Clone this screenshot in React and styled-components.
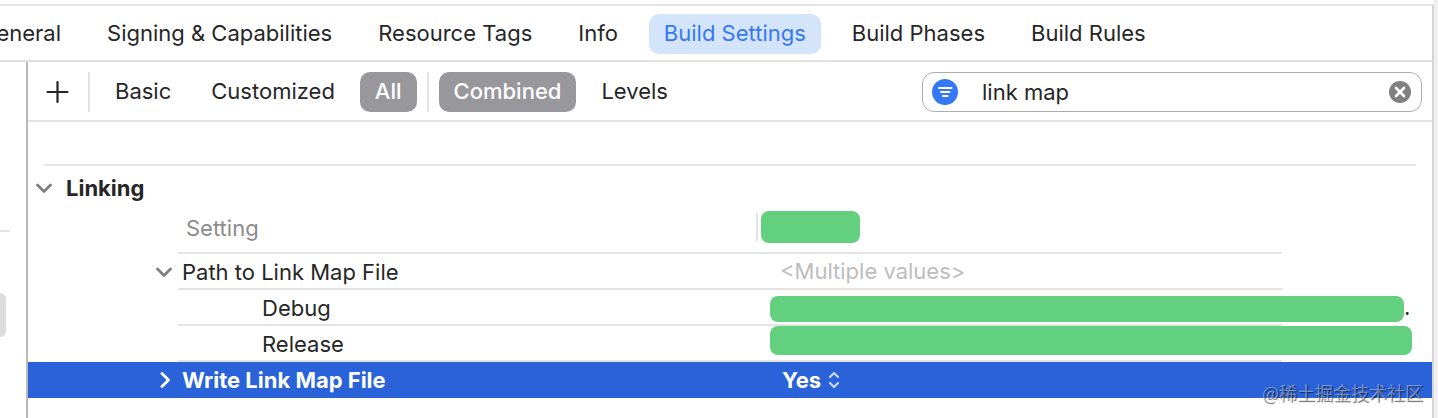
import React, { useState } from "react";
import styled, { createGlobalStyle } from "styled-components";

const GlobalStyle = createGlobalStyle`
  * {
    box-sizing: border-box;
  }

  body {
    margin: 0;
    background: #ffffff;
    color: #262626;
    font-family: Inter, "Noto Sans CJK SC", sans-serif;
    font-size: 22px;
    line-height: 28px;
  }

  button, input, select {
    margin: 0;
    padding: 0;
    border: none;
    background: none;
    color: inherit;
    font: inherit;
  }
`;

const Window = styled.div`
  position: relative;
  min-height: 100vh;
  padding-top: 4px;
  border-right: 4px solid #efefef;
  overflow: hidden;
  display: flex;
  flex-direction: column;
`;

const TabBar = styled.nav`
  display: flex;
  align-items: center;
  gap: 16px;
  height: 58px;
  padding-top: 2px;
  border-top: 2px solid #e4e4e4;
  border-bottom: 2px solid #e0e0e0;
  border-right: 2px solid #d4d4d4;
`;

const Tab = styled.button`
  flex: none;
  height: 40px;
  padding: 0 15px 2px;
  border-radius: 10px;
  white-space: nowrap;
  color: ${({ $active }) => ($active ? "#3478f6" : "#262626")};
  background: ${({ $active }) => ($active ? "#d4e5fb" : "transparent")};

  &:first-child {
    margin-left: -35px;
  }
`;

const Body = styled.div`
  flex: 1;
  display: flex;
  border-right: 2px solid #d4d4d4;
`;

const Sidebar = styled.aside`
  width: 28px;
  flex: none;
  padding-top: 168px;
  border-right: 2px solid #b9b9b9;
`;

const SidebarRule = styled.div`
  width: 10px;
  height: 2px;
  background: #e4e4e4;
`;

const SidebarItem = styled.div`
  width: 6px;
  height: 44px;
  margin-top: 61px;
  border-radius: 0 6px 6px 0;
  background: #dcdcdc;
`;

const Editor = styled.main`
  flex: 1;
  min-width: 0;
`;

const Toolbar = styled.div`
  display: flex;
  align-items: center;
  height: 60px;
  padding: 2px 10px 0 18px;
  border-bottom: 2px solid #e4e4e4;
`;

const AddButton = styled.button`
  width: 24px;
  height: 24px;
  margin-right: 18px;

  svg {
    display: block;
  }
`;

const Divider = styled.div`
  width: 2px;
  height: 40px;
  background: #e2e2e2;
`;

const FilterGroup = styled.div`
  display: flex;
  gap: 10px;
  padding: 0 10px;
`;

const Filter = styled.button`
  height: 40px;
  padding: 0 15px 2px;
  border-radius: 10px;
  font-weight: ${({ $active }) => ($active ? 500 : 400)};
  color: ${({ $active }) => ($active ? "#ffffff" : "#262626")};
  background: ${({ $active }) => ($active ? "#98989c" : "transparent")};
`;

const SearchField = styled.label`
  display: flex;
  align-items: center;
  width: 500px;
  height: 40px;
  margin-left: auto;
  padding: 0 10px 0 9px;
  border: 1px solid #adadad;
  border-radius: 12px;

  svg {
    flex: none;
    display: block;
  }
`;

const SearchInput = styled.input`
  flex: 1;
  min-width: 0;
  padding-left: 24px;
  outline: none;
`;

const Section = styled.section`
  padding-top: 42px;
`;

const SectionHeader = styled.div`
  display: flex;
  align-items: center;
  gap: 14px;
  height: 46px;
  margin: 0 16px;
  border-top: 2px solid #e4e4e4;

  button {
    margin-left: -8px;
  }
`;

const SectionTitle = styled.h2`
  margin: 0;
  font-size: 22px;
  font-weight: 700;
`;

const Disclosure = styled.button`
  display: block;
  width: 16px;
  height: 16px;

  svg {
    display: block;
  }
`;

const Settings = styled.table`
  width: 100%;
  table-layout: fixed;
  border-collapse: separate;
  border-spacing: 0;
`;

const Gutter = styled.col`
  width: 150px;
`;

const NameCol = styled.col`
  width: 578px;
`;

const Cell = styled.td`
  height: 36px;
  padding: 0;
  border-bottom: ${({ $ruled }) => ($ruled ? "2px solid #e4e4e4" : "none")};

  ${Disclosure} {
    margin-left: 128px;
  }
`;

const HeadCell = styled.th`
  height: 44px;
  padding: 0 0 8px;
  border-bottom: 2px solid #e4e4e4;
  text-align: left;
  font-weight: 400;
  color: #8c8c8c;
`;

const Name = styled.div`
  padding-top: 2px;
  padding-left: ${({ $indent }) => $indent}px;
`;

const ValueHead = styled.div`
  display: flex;
  align-items: center;
  gap: 3px;
`;

const HeadDivider = styled.div`
  width: 2px;
  height: 28px;
  background: #e2e2e2;
`;

const Value = styled.div`
  display: flex;
  align-items: center;
  gap: 6px;
  padding-left: 24px;
`;

const Placeholder = styled.span`
  color: #bdbdbd;
`;

const Redacted = styled.div`
  flex: none;
  width: ${({ $width }) => $width};
  height: ${({ $height }) => $height}px;
  border-radius: 8px;
  background: #62d07e;
`;

const PathValue = styled.div`
  display: flex;
  align-items: flex-start;
  height: 34px;
  padding: ${({ $top }) => $top}px 0 0 14px;
  line-height: 22px;
`;

const SelectedRow = styled.tr`
  background: #2962d9;
  color: #ffffff;
  font-weight: 700;

  ${Name} {
    padding-top: 0;
  }
`;

const ValueSelect = styled.select`
  appearance: none;
  width: 42px;
  height: 28px;
  padding-left: 2px;
  outline: none;
`;

const Watermark = styled.div`
  position: absolute;
  right: 11px;
  bottom: 13px;
  font-family: "Noto Sans CJK SC", sans-serif;
  font-size: 18px;
  line-height: 26px;
  color: rgba(255, 255, 255, 0.4);
  text-shadow: 1px 1px 1px rgba(0, 0, 0, 0.6);
`;

const tabs = [
  "General",
  "Signing & Capabilities",
  "Resource Tags",
  "Info",
  "Build Settings",
  "Build Phases",
  "Build Rules",
];

const Chevron = ({ open, color }) => (
  <svg width="16" height="16" viewBox="0 0 16 16" fill="none">
    <path
      d={open ? "M1.5 5 L8 11.5 L14.5 5" : "M6 1.5 L12.5 8 L6 14.5"}
      stroke={color}
      strokeWidth="2.8"
      strokeLinecap="round"
      strokeLinejoin="round"
    />
  </svg>
);

const PlusIcon = () => (
  <svg width="24" height="24" viewBox="0 0 24 24">
    <path
      d="M11.5 2 V22 M1.5 12 H21.5"
      stroke="#262626"
      strokeWidth="2.2"
      strokeLinecap="round"
    />
  </svg>
);

const FilterIcon = () => (
  <svg width="26" height="26" viewBox="0 0 26 26">
    <circle cx="13" cy="13" r="13" fill="#3478f6" />
    <path
      d="M7 9 H19.5 M9 13 H17.5 M11 17 H15.5"
      stroke="#ffffff"
      strokeWidth="2"
      strokeLinecap="round"
    />
  </svg>
);

const ClearIcon = () => (
  <svg width="22" height="22" viewBox="0 0 22 22">
    <circle cx="11" cy="11" r="11" fill="#808080" />
    <path
      d="M7 7 L15 15 M15 7 L7 15"
      stroke="#ffffff"
      strokeWidth="2.6"
      strokeLinecap="round"
    />
  </svg>
);

const StepperIcon = () => (
  <svg width="12" height="18" viewBox="0 0 12 18" fill="none">
    <path
      d="M2 6 L6 2 L10 6 M2 12 L6 16 L10 12"
      stroke="#c9d8f6"
      strokeWidth="2.2"
      strokeLinecap="round"
      strokeLinejoin="round"
    />
  </svg>
);

const App = () => {
  const [activeTab, setActiveTab] = useState("Build Settings");
  const [scope, setScope] = useState("All");
  const [view, setView] = useState("Combined");
  const [query, setQuery] = useState("link map");
  const [writeMap, setWriteMap] = useState("Yes");

  return (
    <Window>
      <GlobalStyle />
      <TabBar>
        {tabs.map((tab) => (
          <Tab
            key={tab}
            $active={tab === activeTab}
            onClick={() => setActiveTab(tab)}
          >
            {tab}
          </Tab>
        ))}
      </TabBar>
      <Body>
        <Sidebar>
          <SidebarRule />
          <SidebarItem />
        </Sidebar>
        <Editor>
          <Toolbar>
            <AddButton aria-label="Add">
              <PlusIcon />
            </AddButton>
            <Divider />
            <FilterGroup>
              {["Basic", "Customized", "All"].map((name) => (
                <Filter
                  key={name}
                  $active={name === scope}
                  onClick={() => setScope(name)}
                >
                  {name}
                </Filter>
              ))}
            </FilterGroup>
            <Divider />
            <FilterGroup>
              {["Combined", "Levels"].map((name) => (
                <Filter
                  key={name}
                  $active={name === view}
                  onClick={() => setView(name)}
                >
                  {name}
                </Filter>
              ))}
            </FilterGroup>
            <SearchField>
              <FilterIcon />
              <SearchInput
                aria-label="Filter"
                value={query}
                onChange={(e) => setQuery(e.target.value)}
              />
              <button aria-label="Clear" onClick={() => setQuery("")}>
                <ClearIcon />
              </button>
            </SearchField>
          </Toolbar>
          <Section>
            <SectionHeader>
              <Disclosure aria-label="Collapse Linking">
                <Chevron open color="#808080" />
              </Disclosure>
              <SectionTitle>Linking</SectionTitle>
            </SectionHeader>
            <Settings>
              <colgroup>
                <Gutter />
                <NameCol />
                <col />
                <Gutter />
              </colgroup>
              <thead>
                <tr>
                  <td />
                  <HeadCell>
                    <Name $indent={8}>Setting</Name>
                  </HeadCell>
                  <HeadCell>
                    <ValueHead>
                      <HeadDivider />
                      <Redacted $width="99px" $height={32} />
                    </ValueHead>
                  </HeadCell>
                  <td />
                </tr>
              </thead>
              <tbody>
                <tr>
                  <Cell>
                    <Disclosure aria-label="Collapse Path to Link Map File">
                      <Chevron open color="#808080" />
                    </Disclosure>
                  </Cell>
                  <Cell $ruled>
                    <Name $indent={4}>Path to Link Map File</Name>
                  </Cell>
                  <Cell $ruled>
                    <Value>
                      <Placeholder>&lt;Multiple values&gt;</Placeholder>
                    </Value>
                  </Cell>
                  <Cell />
                </tr>
                <tr>
                  <Cell />
                  <Cell $ruled>
                    <Name $indent={84}>Debug</Name>
                  </Cell>
                  <Cell $ruled>
                    <PathValue $top={6}>
                      <Redacted $width="calc(100% + 122px)" $height={26} />
                      <span>.</span>
                    </PathValue>
                  </Cell>
                  <Cell />
                </tr>
                <tr>
                  <Cell />
                  <Cell $ruled>
                    <Name $indent={84}>Release</Name>
                  </Cell>
                  <Cell $ruled>
                    <PathValue $top={0}>
                      <Redacted $width="calc(100% + 130px)" $height={29} />
                    </PathValue>
                  </Cell>
                  <Cell />
                </tr>
                <SelectedRow>
                  <Cell>
                    <Disclosure aria-label="Expand Write Link Map File">
                      <Chevron color="#ffffff" />
                    </Disclosure>
                  </Cell>
                  <Cell>
                    <Name $indent={4}>Write Link Map File</Name>
                  </Cell>
                  <Cell>
                    <Value>
                      <ValueSelect
                        aria-label="Write Link Map File"
                        value={writeMap}
                        onChange={(e) => setWriteMap(e.target.value)}
                      >
                        <option>Yes</option>
                        <option>No</option>
                      </ValueSelect>
                      <StepperIcon />
                    </Value>
                  </Cell>
                  <Cell />
                </SelectedRow>
              </tbody>
            </Settings>
          </Section>
        </Editor>
      </Body>
      <Watermark>@稀土掘金技术社区</Watermark>
    </Window>
  );
};

export default App;
